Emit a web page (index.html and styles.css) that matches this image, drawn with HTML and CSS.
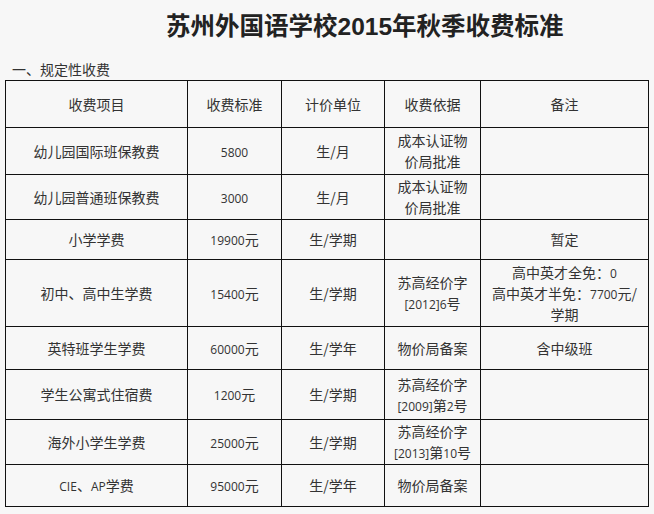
FILE: index.html
```html
<!DOCTYPE html>
<html lang="zh-CN">
<head>
<meta charset="utf-8">
<title>苏州外国语学校2015年秋季收费标准</title>
<link rel="stylesheet" href="styles.css">
</head>
<body>
<h1 class="title">苏州外国语学校<span class="tnum">2015</span>年秋季收费标准</h1>
<p class="section">一、规定性收费</p>
<table class="fees">
  <colgroup>
    <col class="c1"><col class="c2"><col class="c3"><col class="c4"><col class="c5">
  </colgroup>
  <tr class="r-head">
    <td>收费项目</td><td>收费标准</td><td>计价单位</td><td>收费依据</td><td>备注</td>
  </tr>
  <tr class="r1">
    <td>幼儿园国际班保教费</td><td><span class="num">5800</span></td><td>生/月</td><td>成本认证物<br>价局批准</td><td></td>
  </tr>
  <tr class="r2">
    <td>幼儿园普通班保教费</td><td><span class="num">3000</span></td><td>生/月</td><td>成本认证物<br>价局批准</td><td></td>
  </tr>
  <tr class="r3">
    <td>小学学费</td><td><span class="num">19900</span>元</td><td>生/学期</td><td></td><td>暂定</td>
  </tr>
  <tr class="r4">
    <td>初中、高中生学费</td><td><span class="num">15400</span>元</td><td>生/学期</td><td>苏高经价字<br><span class="num">[2012]6</span>号</td><td>高中英才全免：<span class="num">0</span><br>高中英才半免：<span class="num">7700</span>元/<br>学期</td>
  </tr>
  <tr class="r5">
    <td>英特班学生学费</td><td><span class="num">60000</span>元</td><td>生/学年</td><td>物价局备案</td><td>含中级班</td>
  </tr>
  <tr class="r6">
    <td>学生公寓式住宿费</td><td><span class="num">1200</span>元</td><td>生/学期</td><td>苏高经价字<br><span class="num">[2009]</span>第<span class="num">2</span>号</td><td></td>
  </tr>
  <tr class="r7">
    <td>海外小学生学费</td><td><span class="num">25000</span>元</td><td>生/学期</td><td>苏高经价字<br><span class="num">[2013]</span>第<span class="num">10</span>号</td><td></td>
  </tr>
  <tr class="r8">
    <td><span class="num">CIE</span>、<span class="num">AP</span>学费</td><td><span class="num">95000</span>元</td><td>生/学年</td><td>物价局备案</td><td></td>
  </tr>
</table>
</body>
</html>
```

FILE: styles.css
```css
html, body {
  margin: 0;
  padding: 0;
  background: #f7f7f7;
}
body {
  font-family: "Noto Sans CJK SC", "Open Sans", sans-serif;
  color: #333;
  font-size: 14px;
  width: 654px;
  height: 514px;
  overflow: hidden;
}
.title {
  margin: 10px 0 0 0;
  padding-left: 166px;
  height: 30px;
  font-size: 24.5px;
  line-height: 30px;
  font-weight: bold;
  color: #222;
  overflow: visible;
}
.tnum {
  font-family: "Liberation Sans", Arial, sans-serif;
  font-weight: bold;
  font-size: 24.5px;
  line-height: 1;
}
.section {
  margin: 18px 0 0 0;
  padding-left: 12px;
  height: 22px;
  font-size: 14px;
  line-height: 22px;
  color: #333;
}
.fees {
  margin-left: 5px;
  border-collapse: collapse;
  table-layout: fixed;
  width: 644px;
}
.fees td {
  border: 1px solid #111;
  text-align: center;
  vertical-align: middle;
  padding: 0 6px;
  line-height: 21px;
  font-size: 14px;
  color: #333;
}
.num {
  font-family: "Open Sans", "DejaVu Sans", sans-serif;
  font-size: 12px;
  line-height: 1;
}
.c1 { width: 182px; }
.c2 { width: 94px; }
.c3 { width: 103px; }
.c4 { width: 96px; }
.c5 { width: 168px; }
.r-head { height: 47px; }
.r1 { height: 47px; }
.r2 { height: 45px; }
.r3 { height: 40px; }
.r4 { height: 67px; }
.r5 { height: 43px; }
.r6 { height: 50px; }
.r7 { height: 45px; }
.r8 { height: 42px; }
```
